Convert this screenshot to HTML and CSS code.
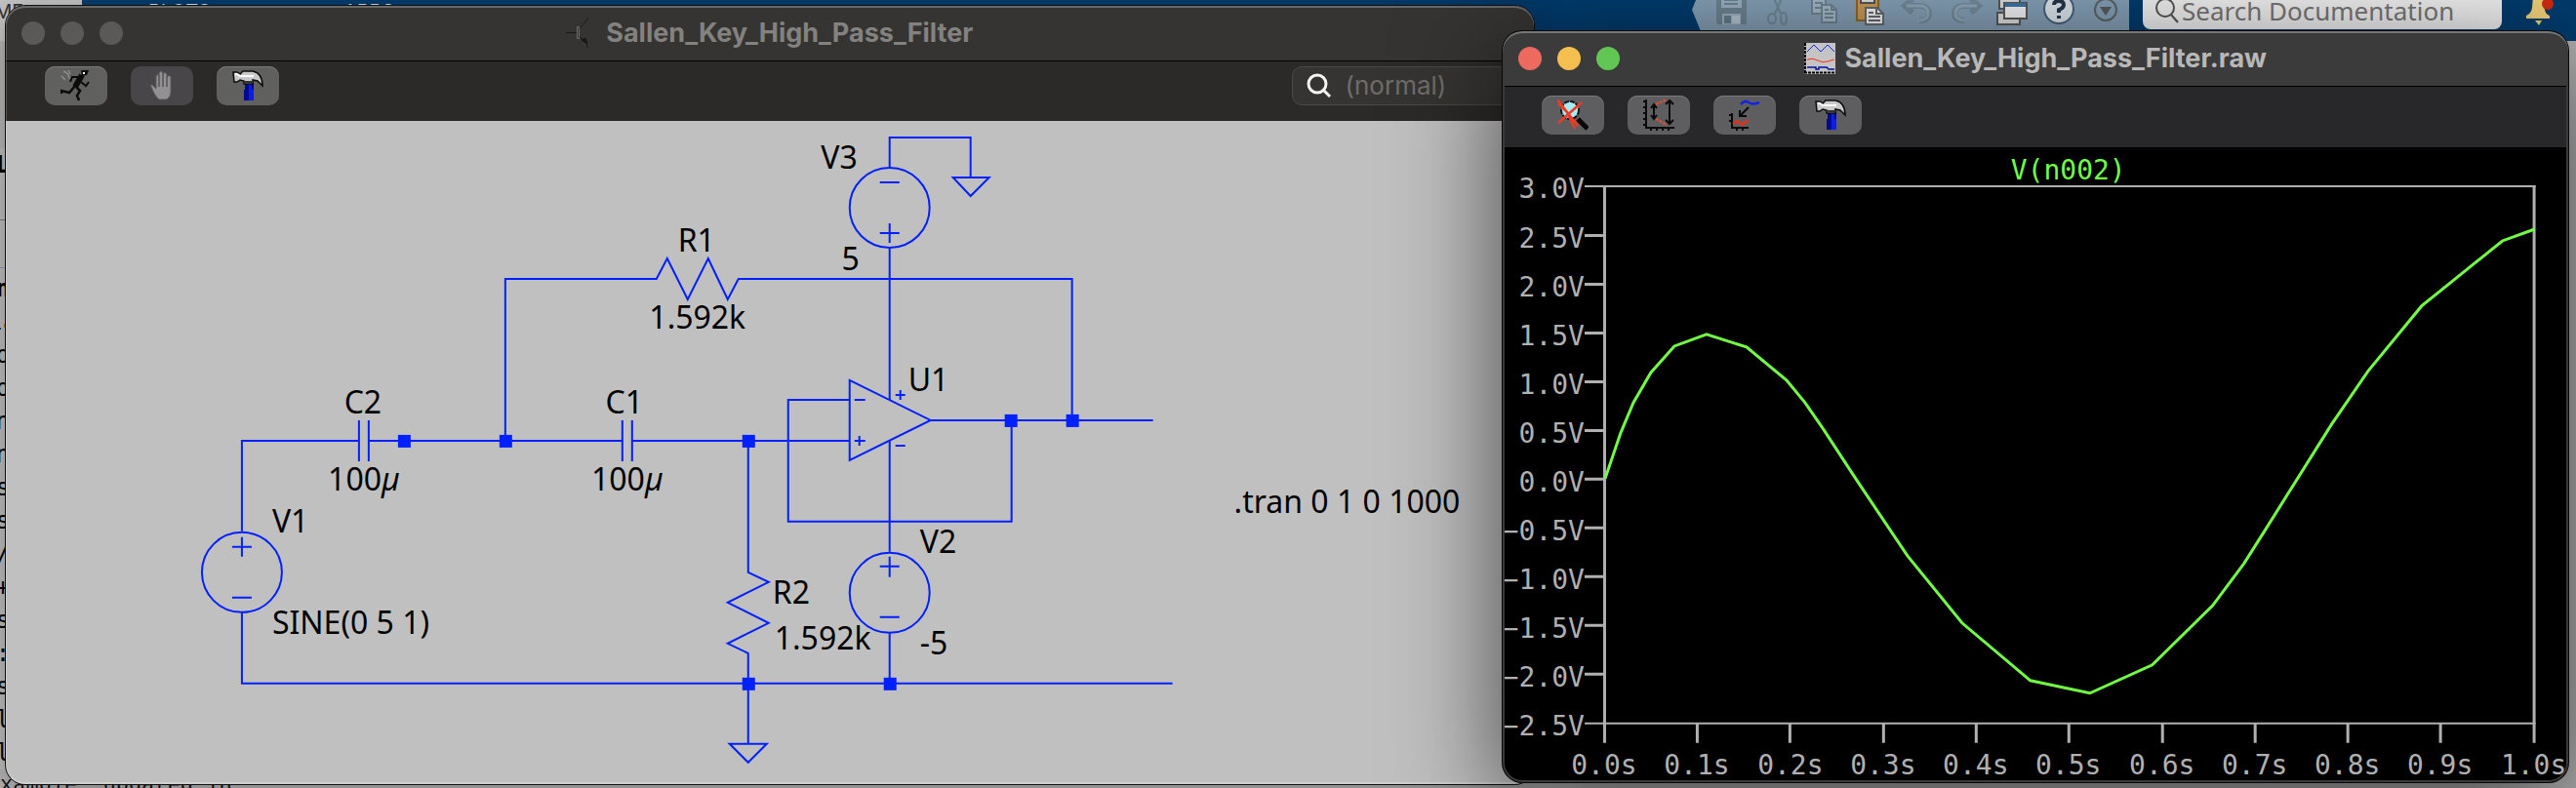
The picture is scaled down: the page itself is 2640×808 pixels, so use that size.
FILE: index.html
```html
<!DOCTYPE html>
<html lang="en">
<head>
<meta charset="utf-8">
<title>Sallen_Key_High_Pass_Filter</title>
<link rel="stylesheet" href="styles.css">
</head>
<body>
<div class="desktop">
  <header class="ribbon">
    <nav class="tabs">
      <a class="tab tab-active" href="#">HOME</a>
      <a class="tab" href="#">PLOTS</a>
      <a class="tab" href="#">APPS</a>
    </nav>
    <div class="quick">
      <button class="quick-btn" aria-label="Save"><svg viewBox="0 0 48 32"><path d="M9 -4H40V25H11L9 23Z" fill="#6d8494"/><path d="M14 -4H35V8H14ZM15 14H34V25H15Z" fill="#9db2c1"/><path d="M17 4H31M17 0H31" stroke="#6d8494" stroke-width="2"/><path d="M17 16H24V24H17Z" fill="#657c8c"/><path d="M25 16H33V24H25Z" fill="#b4c5d1"/></svg></button>
      <button class="quick-btn" aria-label="Cut"><svg viewBox="0 0 48 32" fill="none" stroke="#6f8797" stroke-width="2"><path d="M19 -4L27 14M29 -4L21 14"/><ellipse cx="18" cy="19" rx="4" ry="5"/><ellipse cx="30" cy="19" rx="3" ry="6"/></svg></button>
      <button class="quick-btn" aria-label="Copy"><svg viewBox="0 0 48 32" stroke="#6d8494" stroke-width="2" fill="#a4b8c6"><path d="M11 -4H25V14H11Z"/><path d="M14 3H22M14 8H22"/><path d="M21 5H31L36 10V23H21Z"/><path d="M31 5V10H36M24 10H28M24 14H33M24 18H33" fill="none"/></svg></button>
      <button class="quick-btn" aria-label="Paste"><svg viewBox="0 0 48 32"><path d="M9 -4H31V21H9Z" fill="#c99a55" stroke="#8d672f" stroke-width="2"/><path d="M13 -4H27V3H13Z" fill="#dfe3e6" stroke="#555" stroke-width="2"/><path d="M18 8H30L36 14V25H18Z" fill="#f4f4f4" stroke="#656a70" stroke-width="2"/><path d="M29 8V14H35M21 13H26M21 17H33M21 21H33" fill="none" stroke="#656a70" stroke-width="2"/></svg></button>
      <button class="quick-btn" aria-label="Undo"><svg viewBox="0 0 48 32" fill="none"><path d="M18 -1L10 6L18 13M11 6H27Q35 7 35 14Q35 21 25 21" stroke="#748c9d" stroke-width="6"/><path d="M12 6H27Q34 7 34 14Q34 20 25 21" stroke="#8fa7b9" stroke-width="3"/></svg></button>
      <button class="quick-btn" aria-label="Redo"><svg viewBox="0 0 48 32" fill="none"><path d="M30 -1L38 6L30 13M37 6H21Q13 7 13 14Q13 21 23 21" stroke="#748c9d" stroke-width="6"/><path d="M36 6H21Q14 7 14 14Q14 20 23 21" stroke="#8fa7b9" stroke-width="3"/></svg></button>
      <button class="quick-btn" aria-label="Switch windows"><svg viewBox="0 0 48 32" stroke="#595959" stroke-width="2" fill="#ddd"><path d="M11 -4H32V9H11ZM9 13H32V25H9Z"/><path d="M16 3H39V19H16Z" fill="#f3f3f3"/><path d="M17 5H38" stroke="#3d75a5" stroke-width="4"/></svg></button>
      <button class="quick-btn" aria-label="Help"><svg viewBox="0 0 48 32"><circle cx="24" cy="9" r="15" fill="#dce5ec" stroke="#46607a" stroke-width="2"/><path d="M19 5Q19 1 24 1Q29 1 29 5Q29 8 24 10V13M24 16V19" fill="none" stroke="#25374a" stroke-width="4"/></svg></button>
      <button class="quick-btn" aria-label="More"><svg viewBox="0 0 48 32"><circle cx="24" cy="10" r="11" fill="none" stroke="#5c6468" stroke-width="2"/><path d="M18 7H30L24 16Z" fill="#555b5e"/></svg></button>
    </div>
    <label class="docs"><svg class="docs-icon" viewBox="0 0 26 26" fill="none" stroke="#555" stroke-width="2"><circle cx="11" cy="8" r="9"/><path d="M17 15L24 23"/></svg><input class="docs-input" type="text" placeholder="Search Documentation" aria-label="Search Documentation"></label>
    <button class="bell" aria-label="Notifications"><svg viewBox="0 0 32 32"><path d="M8 -4H20V10Q21 15 25 16V19H1V16Q6 14 7 8Z" fill="#f0d078"/><path d="M10 21H17L14 26Z" fill="#e8d070"/><ellipse cx="23" cy="4" rx="6" ry="6" fill="#d22a10"/></svg></button>
  </header>
  <main class="workspace">
    <div class="sliver" aria-hidden="true"><b>L</b><i></i><b>n</b><span>la</span><span>o</span><span>o</span><span>n</span><span>n</span><span>s</span><span>s</span><span>/</span><span>+</span><span>s</span><span>:</span><span>s</span><span>l</span><span>l</span></div>
    <p class="console">xample, updated in</p>
  </main>

  <section class="window schematic">
    <div class="titlebar">
      <div class="lights"><button class="light" aria-label="Close"></button><button class="light" aria-label="Minimize"></button><button class="light" aria-label="Zoom"></button></div>
      <h1 class="title"><svg class="title-icon" viewBox="0 0 32 32" fill="none" stroke="#181817" stroke-width="1"><path d="M0 15.500H11M14 11L22 2V0M14 19L22 28V31"/><path d="M11.500 9.500H13.500V21.500H11.500Z" stroke="#6c6b69"/><path d="M16 23L20 21L22 27Z" fill="#181817"/></svg>Sallen_Key_High_Pass_Filter</h1>
    </div>
    <div class="toolbar">
      <button class="tool" aria-label="Run"><svg viewBox="0 0 32 32" fill="none" stroke="#0c0c0c" stroke-width="3"><path d="M1 6L5 10M3 1Q9 3 9 9M8 0L10 4" stroke="#8d8c8a" stroke-width="1.500"/><path d="M21 0H29L27 5L22 6Z" fill="#0c0c0c" stroke="none"/><path d="M23 2H25V4H23Z" fill="#fff" stroke="none"/><path d="M22 5L15 17" stroke-width="6"/><path d="M19 7L12 7L10 12M21 12L26 16L29 12" stroke-width="2"/><path d="M15 16L9 23L1 21V24" stroke-width="2.500"/><path d="M16 17L20 21L17 26L19 31" stroke-width="2.500"/></svg></button>
      <button class="tool tool-off" aria-label="Halt" disabled><svg viewBox="0 0 32 32"><path d="M5 17Q3 15 6 15L10 19V6Q11 3 13 6V3Q15 -1 17 3V4Q19 1 21 4V7Q24 4 25 7V23Q24 29 20 30H13Q9 27 5 17Z" fill="#929192" stroke="#5d5b5d"/><path d="M13 5V17M17 3V17M21 6V17" stroke="#555355" stroke-width="1.500"/></svg></button>
      <button class="tool" aria-label="Control panel"><svg viewBox="0 0 32 32"><path d="M13 13H22V31H12V20H13Z" fill="#000a8c"/><path d="M17 15H20V20H22V31H17Z" fill="#0a1ee8"/><path d="M1 2H5L8 4L11 1H21Q31 3 31 16L26 11L21 10V14H12V11L8 10L5 12H2Z" fill="#c9c9c9" stroke="#0c0c0c" stroke-width="1.500"/><path d="M3 4H5L8 6H22" stroke="#fff" stroke-width="2" fill="none"/><path d="M12 12H21" stroke="#333" stroke-width="2"/></svg></button>
      <label class="mode"><svg class="mode-icon" viewBox="0 0 26 26" fill="none" stroke="#f4f4f4" stroke-width="3"><circle cx="11" cy="11" r="9"/><path d="M17 17L24 24"/></svg><input class="mode-input" type="text" placeholder="(normal)" aria-label="Mode"></label>
    </div>
    <svg class="canvas" viewBox="6 124 1566 680" preserveAspectRatio="xMinYMin meet">
      <g class="wire">
        <path d="M248 545V452H368M378 452H638M648 452H871M248 628V701H1202M767 452V587L788 597L746 618L788 639L746 660L767 670V763M748 763H786L767 782Z"/>
        <path d="M368 431V473M378 431V473M638 431V473M648 431V473"/>
        <path d="M518 452V286H673L684 265L705 307L726 265L746 307L757 286H1099V431"/>
        <path d="M912 171V141H995V182M977 182H1014L995 201ZM912 255V410M912 452V566M912 649V701"/>
        <path d="M871 390L954 431L871 472ZM954 431H1182M871 410H808V535H1037V431"/>
        <circle cx="248" cy="587" r="41"/><circle cx="912" cy="213" r="41"/><circle cx="912" cy="608" r="41"/>
        <path d="M238 561H258M248 551V571M238 613H258M902 187H922M902 239H922M912 229V249M902 581H922M912 571V592M902 633H922"/>
        <path d="M876 410H887M876 452H887M881 447V457M918 405H928M923 400V410M918 457H928"/>
      </g>
      <g class="node">
        <rect x="408" y="446" width="13" height="13"/><rect x="512" y="446" width="13" height="13"/><rect x="761" y="446" width="13" height="13"/><rect x="1030" y="425" width="13" height="13"/><rect x="1093" y="425" width="13" height="13"/><rect x="761" y="695" width="13" height="13"/><rect x="906" y="695" width="13" height="13"/>
      </g>
      <g class="label">
        <text class="mid" x="372" y="424">C2</text><text class="mid" x="373" y="503">100<tspan class="mu">µ</tspan></text>
        <text class="mid" x="640" y="424">C1</text><text class="mid" x="643" y="503">100<tspan class="mu">µ</tspan></text>
        <text x="279" y="546">V1</text><text x="279" y="650">SINE(0 5 1)</text>
        <text x="792" y="619">R2</text><text x="794" y="666">1.592k</text>
        <text class="end" x="879" y="173">V3</text><text class="end" x="881" y="277">5</text>
        <text class="mid" x="714" y="258">R1</text><text class="mid" x="715" y="337">1.592k</text>
        <text x="931" y="401">U1</text><text x="943" y="567">V2</text><text x="943" y="671">-5</text>
        <text x="1265" y="526">.tran 0 1 0 1000</text>
      </g>
    </svg>
  </section>

  <section class="window waveform">
    <div class="titlebar">
      <div class="lights"><button class="light red" aria-label="Close"></button><button class="light amber" aria-label="Minimize"></button><button class="light green" aria-label="Zoom"></button></div>
      <h1 class="title"><svg class="title-icon" viewBox="0 0 32 32" fill="none"><path d="M0 0H32V32H0Z" fill="#c4c4c4"/><path d="M1 0V30M0 30.500H32" stroke="#000" stroke-width="2" stroke-dasharray="3 1"/><path d="M3 9L10 2L17 9L24 2L31 9" stroke="#0a2bff"/><path d="M3 17Q9 15 14 18T24 19L31 17" stroke="#ff2a10"/><path d="M3 25H12V27H15V25H23L25 27H31" stroke="#00129a" stroke-width="1.500"/></svg>Sallen_Key_High_Pass_Filter.raw</h1>
    </div>
    <div class="toolbar">
      <button class="tool" aria-label="Zoom to fit"><svg viewBox="0 0 32 32" fill="none"><circle cx="13" cy="11" r="9" fill="#a5edf2" stroke="#141414" stroke-width="2" stroke-dasharray="5 1"/><path d="M21 20L31 30" stroke="#080808" stroke-width="5"/><path d="M0 0L21 27M25 3L1 24M1 4L10 13M10 13L18 30" stroke="#ef3a24" stroke-width="2.500"/></svg></button>
      <button class="tool" aria-label="Autorange"><svg viewBox="0 0 32 32" fill="none" stroke="#0a0a0a" stroke-width="2"><path d="M3 0V29H32M0 2H3M0 8H3M0 14H3M0 20H3M0 26H3M8 29V32M14 29V32M20 29V32M26 29V32"/><path d="M11 6V19M8 9L11 5L14 9M8 16L11 20L14 16M27 1V25M23 5L27 1L31 5M23 21L27 25L31 21"/><path d="M13 5L24 0M13 20L24 26" stroke="#e4502e" stroke-dasharray="3 1"/></svg></button>
      <button class="tool" aria-label="Add trace"><svg viewBox="0 0 32 32" fill="none" stroke="#0a0a0a" stroke-width="2"><path d="M3 14V29H20M0 16H3M0 22H3M8 29V32M14 29V32"/><path d="M4 25L8 22L13 26L20 21" stroke="#e22f1c" stroke-width="2.500"/><path d="M20 8L11 17M11 11V17H18"/><path d="M12 5Q16 0 20 3T31 3" stroke="#1423e0" stroke-width="2.500"/></svg></button>
      <button class="tool" aria-label="Control panel"><svg viewBox="0 0 32 32"><path d="M13 13H22V31H12V20H13Z" fill="#000a8c"/><path d="M17 15H20V20H22V31H17Z" fill="#0a1ee8"/><path d="M1 2H5L8 4L11 1H21Q31 3 31 16L26 11L21 10V14H12V11L8 10L5 12H2Z" fill="#c9c9c9" stroke="#0c0c0c" stroke-width="1.500"/><path d="M3 4H5L8 6H22" stroke="#fff" stroke-width="2" fill="none"/><path d="M12 12H21" stroke="#333" stroke-width="2"/></svg></button>
    </div>
    <svg class="canvas plot" viewBox="1540 151 1092 651" preserveAspectRatio="xMinYMin meet">
      <path class="frame-h" d="M1624 191H2599M1624 742H2599"/>
      <path class="frame" d="M1644.500 190V762M2597.500 190V762"/>
      <path class="frame" d="M1624 241.500H1643M1624 291.500H1643M1624 341.500H1643M1624 391.500H1643M1624 441.500H1643M1624 491.500H1643M1624 541.500H1643M1624 591.500H1643M1624 641.500H1643M1624 691.500H1643"/>
      <path class="frame" d="M1739.500 742V762M1834.500 742V762M1930.500 742V762M2025.500 742V762M2120.500 742V762M2216.500 742V762M2311.500 742V762M2406.500 742V762M2501.500 742V762"/>
      <path class="trace" d="M1645 491L1661 444L1674 413L1692 382L1716 355L1749 343L1790 356L1831 390L1850 413L1868 439L1904 494L1955 570L2011 639L2081 698L2142 711L2206 682L2268 621L2300 578L2319 548L2390 435L2427 381L2482 314L2565 247L2598 235"/>
      <g class="axis end">
        <text x="1624" y="203">3.0V</text><text x="1624" y="254">2.5V</text><text x="1624" y="304">2.0V</text><text x="1624" y="354">1.5V</text><text x="1624" y="404">1.0V</text><text x="1624" y="454">0.5V</text><text x="1624" y="504">0.0V</text><text x="1624" y="554">−0.5V</text><text x="1624" y="604">−1.0V</text><text x="1624" y="654">−1.5V</text><text x="1624" y="704">−2.0V</text><text x="1624" y="754">−2.5V</text>
      </g>
      <g class="axis mid">
        <text x="1644" y="794">0.0s</text><text x="1739" y="794">0.1s</text><text x="1835" y="794">0.2s</text><text x="1930" y="794">0.3s</text><text x="2025" y="794">0.4s</text><text x="2120" y="794">0.5s</text><text x="2216" y="794">0.6s</text><text x="2311" y="794">0.7s</text><text x="2406" y="794">0.8s</text><text x="2501" y="794">0.9s</text><text x="2597" y="794">1.0s</text>
      </g>
      <text class="axis mid legend" x="2120" y="184">V(n002)</text>
    </svg>
  </section>
</div>
</body>
</html>
```
FILE: styles.css
```css
* { box-sizing: border-box; }
body { margin: 0; font-family: Inter, "Liberation Sans", sans-serif; }
button { border: 0; padding: 0; background: none; }
svg { display: block; }

.desktop {
  position: relative;
  display: flex;
  flex-direction: column;
  height: 100vh;
  overflow: hidden;
  background: #b4b4b4;
}

/* Application behind the two windows */
.ribbon { display: flex; height: 42px; background: #003c6e; }
.tabs { display: flex; flex: 1; margin-left: -36px; }
.tab { padding: 0 68px; color: #d8dde2; font-size: 20px; line-height: 24px; text-decoration: none; }
.tab-active { width: 120px; padding: 0; color: #333; background: #c4c4c4; }
.quick {
  display: flex;
  height: 32px;
  padding-left: 16px;
  background: #85a0b6;
  clip-path: polygon(4px 0, 100% 0, 100% 100%, 9px 100%, 0 10px);
}
.quick-btn { width: 48px; height: 32px; }
.docs {
  display: flex;
  align-items: flex-start;
  width: 368px;
  height: 30px;
  margin-left: 14px;
  padding-left: 12px;
  gap: 2px;
  border-radius: 0 0 8px 8px;
  background: #f1f1f1;
}
.docs-icon { width: 26px; height: 26px; }
.docs-input {
  flex: 1;
  min-width: 0;
  height: 22px;
  padding: 0;
  border: 0;
  background: none;
  font: 26px/22px "Noto Sans", sans-serif;
}
.docs-input::placeholder { color: #777; opacity: 1; }
.bell { width: 32px; height: 32px; margin: 0 20px 0 24px; }

.workspace { position: relative; display: flex; flex: 1; flex-direction: column; justify-content: space-between; overflow: hidden; }
.sliver {
  display: flex;
  flex-direction: column;
  width: 6px;
  margin-top: 110px;
  overflow: hidden;
  font: 24px/34px "DejaVu Sans Mono", monospace;
  background: #bcbcbc;
}
.sliver span, .sliver b { display: flex; justify-content: center; height: 34px; }
.sliver i { height: 50px; margin: 39px 0 4px; border-top: 1px solid #777; border-bottom: 1px solid #8b98a8; }
.console { margin: 0 0 -10px; font: 22px/24px "Liberation Mono", monospace; color: #111; }

/* Windows */
.window {
  position: absolute;
  display: flex;
  flex-direction: column;
  overflow: hidden;
  border-radius: 20px;
}
.window::after {
  content: "";
  position: absolute;
  inset: 0;
  border-radius: 20px;
  pointer-events: none;
}
.schematic { left: 6px; top: 6px; bottom: 4px; width: 59.3%; background: #c0c0c0; box-shadow: 0 0 0 1px #111, 0 10px 40px rgba(0, 0, 0, .3); }
.schematic::after { box-shadow: inset 0 2px 0 #6a6967, inset 1px 0 0 rgba(255, 255, 255, .2), inset 0 -2px 0 rgba(255, 255, 255, .25); }
.waveform { left: 58.35%; right: 8px; top: 32px; bottom: 6px; background: #000; box-shadow: 0 0 0 1px #080808, 0 25px 110px rgba(0, 0, 0, .65); }
.waveform::after { box-shadow: inset 0 2px 0 #777, inset 0 0 0 2px #3a3a3a; }

.titlebar { display: grid; grid-template-columns: 1fr auto 1fr; align-items: center; height: 57px; border-bottom: 1px solid #000; }
.schematic .titlebar { background: #353432; color: #83827f; }
.waveform .titlebar { background: #3b3b3b; color: #b8b8b8; }
.lights { display: flex; gap: 16px; padding-left: 16px; }
.light { width: 24px; height: 24px; border-radius: 50%; background: #5a5957; }
.red { background: #ed6a5f; }
.amber { background: #f5bf4f; }
.green { background: #62c655; }
.title { display: flex; align-items: center; gap: 9px; margin: 0; grid-column: 2; font-size: 27px; line-height: 32px; font-weight: 700; }
.title-icon { width: 32px; height: 32px; }

.toolbar { display: flex; align-items: flex-start; gap: 24px; height: 61px; padding: 5px 12px 0 40px; }
.schematic .toolbar { background: #2b2a28; }
.waveform .toolbar { height: 62px; padding-top: 9px; background: #28282a; }
.tool { display: flex; justify-content: center; width: 64px; height: 40px; padding-top: 4px; border-radius: 10px; background: #60605e; box-shadow: inset 0 1px 0 #7a7a79; }
.waveform .tool { background: #5e5e60; }
.tool svg { width: 32px; height: 32px; }
.tool-off { background: #484648; box-shadow: none; }
.mode {
  display: flex;
  align-items: center;
  gap: 14px;
  width: 236px;
  height: 40px;
  margin-left: auto;
  padding-left: 14px;
  border: 1px solid #4a4947;
  border-radius: 10px;
  background: #353432;
}
.mode-icon { width: 26px; height: 26px; }
.mode-input { flex: 1; min-width: 0; padding: 0; border: 0; background: none; font: 26px/32px Inter, sans-serif; }
.mode-input::placeholder { color: #6f6d6b; opacity: 1; }

.canvas { flex: 1; width: 100%; min-height: 0; }
.wire { fill: none; stroke: #0020ff; stroke-width: 2; }
.node { fill: #0020ff; }
.label { font: 32px "Noto Sans", sans-serif; fill: #000; }
.mu { font-style: italic; }
.mid { text-anchor: middle; }
.end { text-anchor: end; }
.frame { fill: none; stroke: #b0b0b0; stroke-width: 3; }
.frame-h { fill: none; stroke: #b0b0b0; stroke-width: 2; }
.trace { fill: none; stroke: #73ff45; stroke-width: 3; }
.axis { font: 28px "DejaVu Sans Mono", monospace; fill: #b0b0b0; }
.legend { fill: #73ff45; }
```
